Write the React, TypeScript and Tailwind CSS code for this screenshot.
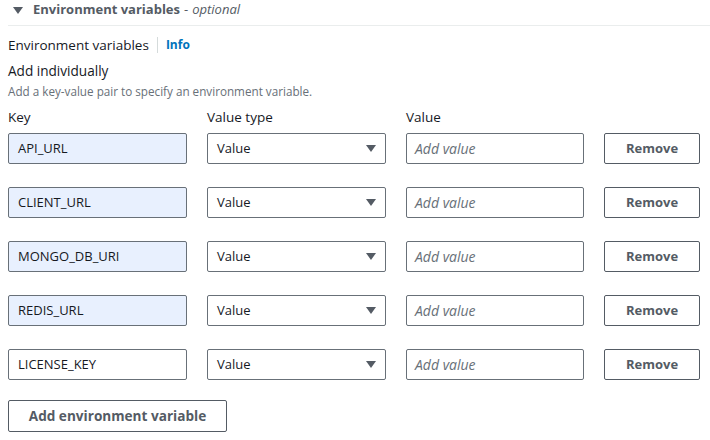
import React from "react";

const rows = [
  { key: "API_URL", filled: true },
  { key: "CLIENT_URL", filled: true },
  { key: "MONGO_DB_URI", filled: true },
  { key: "REDIS_URL", filled: true },
  { key: "LICENSE_KEY", filled: false },
];

const Caret = () => (
  <svg width="10" height="8" viewBox="0 0 10 8">
    <path d="M0 0 H10 L5 7 Z" fill="#545b64" />
  </svg>
);

const App = () => {
  return (
    <div
      className="w-[710px] h-[440px] bg-white text-[#16191f] overflow-hidden"
      style={{ fontFamily: "'Open Sans', Roboto, sans-serif" }}
    >
      {/* Section header */}
      <div className="ml-2 h-[26px] flex items-center border-b border-[#eaeded] pb-[5px]">
        <div className="ml-[5px] mr-[10px] mt-[1px]">
          <Caret />
        </div>
        <span className="text-[13px] font-bold text-[#545b64]">Environment variables</span>
        <span className="text-[13px] text-[#545b64] ml-[4px]">-</span>
        <span className="text-[13px] italic text-[#545b64] ml-[4px]">optional</span>
      </div>

      <div className="px-2">
        <div className="flex items-center h-[20px] mt-[9px]">
          <span className="text-[13.5px]">Environment variables</span>
          <span className="mx-[8px] w-px h-[16px] bg-[#d5dbdb]" />
          <span className="text-[12px] font-bold text-[#0073bb]">Info</span>
        </div>
        <div className="text-[13.6px] h-[20px] mt-[6px] leading-[20px]">Add individually</div>
        <div className="text-[11.7px] text-[#687078] h-[16px] leading-[16px] mt-[2px]">
          Add a key-value pair to specify an environment variable.
        </div>

        <div className="flex gap-5 text-[13.5px] mt-[8px] h-[20px] leading-[20px]">
          <div className="w-[179px]">Key</div>
          <div className="w-[179px]">Value type</div>
          <div className="w-[178px]">Value</div>
        </div>

        <div className="flex flex-col gap-[23px] mt-[6px]">
          {rows.map((r) => (
            <div key={r.key} className="flex gap-5 h-[31px]">
              <div
                className={
                  "w-[179px] border border-[#687078] rounded-[2px] flex items-center px-[9px] text-[13px] " +
                  (r.filled ? "bg-[#e8f0fe]" : "bg-white")
                }
              >
                {r.key}
              </div>
              <div className="w-[179px] border border-[#687078] rounded-[2px] flex items-center justify-between pl-[9px] pr-[9px] text-[13px]">
                <span>Value</span>
                <Caret />
              </div>
              <div className="w-[178px] border border-[#687078] rounded-[2px] flex items-center px-[8px] text-[14px] italic text-[#687078]">
                Add value
              </div>
              <button className="w-[96px] border border-[#545b64] rounded-[2px] text-[13px] font-bold text-[#545b64] bg-white">
                Remove
              </button>
            </div>
          ))}
        </div>

        <button className="mt-[20px] w-[219px] h-[32px] border border-[#545b64] rounded-[2px] text-[13.6px] font-bold text-[#545b64] bg-white">
          Add environment variable
        </button>
      </div>
    </div>
  );
};

export default App;
